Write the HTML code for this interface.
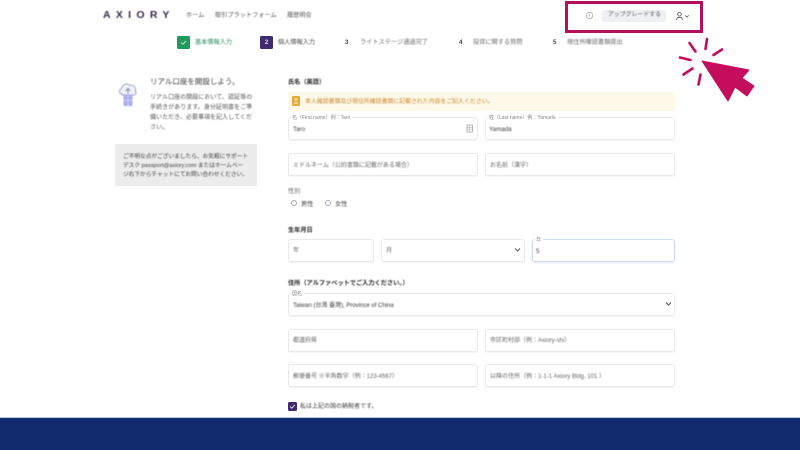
<!DOCTYPE html>
<html lang="ja">
<head>
<meta charset="utf-8">
<style>
html,body{margin:0;padding:0;background:#fff}
body{width:800px;height:450px;position:relative;overflow:hidden;font-family:"Liberation Sans","Noto Sans CJK JP",sans-serif;color:#666}
.a{position:absolute;white-space:nowrap}
.t{filter:blur(.4px)}
.f{position:absolute;box-sizing:border-box;height:23px;background:#fff;border:1px solid #e8e9ec;border-radius:3px;box-shadow:0 1px 1px rgba(0,0,0,.05)}
.p{position:absolute;white-space:nowrap;font-size:6px;line-height:10px;color:#666;filter:blur(.4px)}
.v{position:absolute;white-space:nowrap;font-size:6.2px;line-height:10px;color:#3a3a3a;filter:blur(.4px)}
.l{position:absolute;white-space:nowrap;font-size:5px;line-height:6px;color:#888;background:#fff;padding:0 2px 0 1px;filter:blur(.3px)}
.h{position:absolute;white-space:nowrap;font-size:6.2px;line-height:10px;font-weight:bold;color:#1e1e1e;filter:blur(.4px)}
.s{position:absolute;white-space:nowrap;font-size:6.2px;line-height:10px;color:#6a6a6a;filter:blur(.4px)}
.n{position:absolute;white-space:nowrap;font-size:6.2px;line-height:10px;color:#444;font-weight:bold;filter:blur(.35px)}
</style>
</head>
<body>

<!-- header -->
<div class="a t" style="left:103px;top:9px;font-size:10.5px;line-height:13px;font-weight:bold;letter-spacing:5.3px;color:#38294f">AXIORY</div>
<div class="a t" style="left:186px;top:11px;font-size:6.2px;line-height:10px;color:#555">ホーム</div>
<div class="a t" style="left:215px;top:11px;font-size:6.2px;line-height:10px;color:#555">取引プラットフォーム</div>
<div class="a t" style="left:287px;top:11px;font-size:6.2px;line-height:10px;color:#555">履歴明会</div>

<svg class="a" style="left:585px;top:11px" width="9" height="9" viewBox="0 0 9 9"><circle cx="4.5" cy="4.5" r="3.2" fill="none" stroke="#aaa" stroke-width=".8"/><path d="M4.5 2.800V4.800H3.400" fill="none" stroke="#aaa" stroke-width=".6"/></svg>
<div class="a" style="left:602px;top:10px;width:64px;height:11.500px;background:#eef0f4;border-radius:3px"></div>
<div class="a t" style="left:608px;top:10px;font-size:5.900px;line-height:11px;color:#555">アップグレードする</div>
<svg class="a" style="left:675px;top:10.500px" width="16" height="10" viewBox="0 0 16 10"><circle cx="4.500" cy="3.200" r="1.800" fill="none" stroke="#555" stroke-width=".8"/><path d="M1.500 8.800C1.800 6.800 3 6.300 4.500 6.300S7.200 6.800 7.500 8.800" fill="none" stroke="#555" stroke-width=".8"/><path d="M10.200 4.400L12 6.200L13.800 4.400" fill="none" stroke="#555" stroke-width=".8"/></svg>

<!-- stepper -->
<div class="a" style="left:177px;top:36px;width:13px;height:13px;background:#229a5d;border-radius:1.500px"></div>
<svg class="a" style="left:177px;top:36px" width="13" height="13" viewBox="0 0 13 13"><path d="M4 6.600L5.800 8.300L9 5" fill="none" stroke="#cfe9da" stroke-width=".9"/></svg>
<div class="s" style="left:195px;top:38px;color:#2a8a5a">基本情報入力</div>
<div class="a" style="left:260px;top:36px;width:13px;height:13px;background:#41296f;border-radius:1.500px"></div>
<div class="a" style="left:260px;top:36px;width:13px;height:13px;text-align:center;font-size:6.500px;line-height:13px;font-weight:bold;color:#ddd">2</div>
<div class="s" style="left:278px;top:38px;color:#444">個人情報入力</div>
<div class="n" style="left:345px;top:38px">3</div>
<div class="s" style="left:360px;top:38px">ライトステージ通過完了</div>
<div class="n" style="left:459px;top:38px">4</div>
<div class="s" style="left:473px;top:38px">投資に関する質問</div>
<div class="n" style="left:553px;top:38px">5</div>
<div class="s" style="left:567px;top:38px">現住所確認書類提出</div>

<!-- left panel -->
<svg class="a t" style="left:117px;top:81px" width="22" height="27" viewBox="0 0 22 27"><path d="M5 13C2 13 1.500 8.500 4.500 7.800C5 3.500 10 1.500 13 4.500C16.500 3.500 19.500 6.500 18 9.800C20 11 19 14 16.500 14H5Z" fill="#f3f4fb" stroke="#9ea4d8" stroke-width="1"/><path d="M8.500 10L11 7.500L13.500 10M11 8V13" fill="none" stroke="#8b90d0" stroke-width="1.200"/><rect x="6.500" y="14" width="9" height="11" fill="#a9aee8"/><path d="M11 14V25M6.500 19.500H15.500" stroke="#d6d8f6" stroke-width=".8"/></svg>
<div class="a t" style="left:150px;top:76px;font-size:7.500px;line-height:12px;color:#3a3a3a">リアル口座を開設しよう。</div>
<div class="a t" style="left:150px;top:93px;font-size:6.050px;line-height:10px;color:#555">リアル口座の開設において、認証等の<br>手続きがあります。身分証明書をご準<br>備いただき、必要事項を記入してくだ<br>さい。</div>
<div class="a" style="left:115px;top:144px;width:142px;height:42px;background:#ececec"></div>
<div class="a t" style="left:123px;top:152.500px;font-size:5.700px;line-height:9px;color:#3c3c3c">ご不明な点がございましたら、お気軽にサポート<br>デスク passport@axiory.com またはホームペー<br>ジ右下からチャットにてお問い合わせください。</div>

<!-- form -->
<div class="h" style="left:288px;top:78px">氏名（英語）</div>

<div class="a" style="left:288px;top:92px;width:387px;height:19px;background:#fdf8e7;border-radius:2px"></div>
<div class="a" style="left:292px;top:96px;width:8px;height:10px;background:#e3ad37;border-radius:1px"></div>
<svg class="a" style="left:292px;top:96px" width="8" height="10" viewBox="0 0 8 10"><circle cx="4" cy="3.400" r="1.300" fill="#fff5d8"/><path d="M1.800 7.500C2 5.800 6 5.800 6.200 7.500Z" fill="#fff5d8"/></svg>
<div class="a t" style="left:305px;top:97px;font-size:5.900px;line-height:10px;color:#c98a30">本人確認書類及び現住所確認書類に記載された内容をご記入ください。</div>

<!-- name -->
<div class="f" style="left:288px;top:117px;width:190px"></div>
<div class="l" style="left:291px;top:115px">名（First name）例：Taro</div>
<div class="v" style="left:293px;top:125px">Taro</div>
<svg class="a" style="left:466px;top:124px" width="8" height="9" viewBox="0 0 8 9"><rect x="1" y="1" width="5.500" height="7" fill="none" stroke="#999" stroke-width=".7"/><path d="M1 3.300H6.500M1 5.600H6.500M3.700 1V8" stroke="#aaa" stroke-width=".5"/></svg>

<div class="f" style="left:485px;top:117px;width:190px"></div>
<div class="l" style="left:488px;top:115px">姓（Last name）例：Yamada</div>
<div class="v" style="left:489px;top:125px">Yamada</div>

<div class="f" style="left:288px;top:153px;width:190px"></div>
<div class="p" style="left:293px;top:161px">ミドルネーム（公的書類に記載がある場合）</div>
<div class="f" style="left:485px;top:153px;width:190px"></div>
<div class="p" style="left:490px;top:161px">お名前（漢字）</div>

<!-- gender -->
<div class="s" style="left:288px;top:187px">性別</div>
<div class="a" style="left:291px;top:200px;width:4px;height:4px;border:1px solid #aab;border-radius:50%"></div>
<div class="v" style="left:301px;top:200px">男性</div>
<div class="a" style="left:325px;top:200px;width:4px;height:4px;border:1px solid #aab;border-radius:50%"></div>
<div class="v" style="left:335px;top:200px">女性</div>

<!-- birthday -->
<div class="h" style="left:288px;top:226px">生年月日</div>
<div class="f" style="left:288px;top:239px;width:86px"></div>
<div class="p" style="left:293px;top:246px">年</div>
<div class="f" style="left:381px;top:239px;width:144px"></div>
<div class="p" style="left:386px;top:246px">月</div>
<svg class="a" style="left:514px;top:247px" width="7" height="6" viewBox="0 0 7 6"><path d="M1 1.500L3.500 4L6 1.500" fill="none" stroke="#555" stroke-width="1"/></svg>
<div class="f" style="left:532px;top:239px;width:143px;border-color:#cfdcef;box-shadow:0 1px 2px rgba(90,130,220,.18)"></div>
<div class="l" style="left:535px;top:237px">日</div>
<div class="v" style="left:536px;top:247px">5</div>

<!-- address -->
<div class="h" style="left:288px;top:279px">住所（アルファベットでご入力ください。）</div>
<div class="f" style="left:288px;top:293px;width:387px"></div>
<div class="l" style="left:291px;top:291px">国名</div>
<div class="v" style="left:293px;top:301px;font-size:6px">Taiwan (台湾 臺灣), Province of China</div>
<svg class="a" style="left:665px;top:301px" width="7" height="6" viewBox="0 0 7 6"><path d="M1 1.500L3.500 4L6 1.500" fill="none" stroke="#555" stroke-width="1"/></svg>

<div class="f" style="left:288px;top:329px;width:190px"></div>
<div class="p" style="left:293px;top:336px">都道府県</div>
<div class="f" style="left:485px;top:329px;width:190px"></div>
<div class="p" style="left:490px;top:336px">市区町村部（例：Axiory-shi）</div>

<div class="f" style="left:288px;top:364px;width:190px"></div>
<div class="p" style="left:293px;top:372px">郵便番号 ※半角数字（例：123-4567）</div>
<div class="f" style="left:485px;top:364px;width:190px"></div>
<div class="p" style="left:490px;top:372px">以降の住所（例：1-1-1 Axiory Bldg. 101 ）</div>

<div class="a" style="left:288px;top:402px;width:9px;height:9px;background:#41296f;border-radius:1.500px"></div>
<svg class="a" style="left:288px;top:402px" width="9" height="9" viewBox="0 0 9 9"><path d="M2.200 4.600L3.800 6.200L6.800 2.800" fill="none" stroke="#ddd" stroke-width="1"/></svg>
<div class="v" style="left:300px;top:402px;font-size:6px">私は上記の国の納税者です。</div>

<!-- footer -->
<div class="a" style="left:0;top:417px;width:800px;height:1px;background:#b9cbe4"></div>
<div class="a" style="left:0;top:418px;width:800px;height:32px;background:#11296d"></div>

<!-- annotation -->
<div class="a" style="left:565px;top:1px;width:138px;height:32px;box-sizing:border-box;border:3px solid #b20f5c"></div>
<svg class="a" style="left:670px;top:30px" width="95" height="80" viewBox="670 30 95 80">
<path d="M702 61L749 70L742 78L754 86L747 96L735 87L728 101Z" fill="#c50d5d" stroke="#c50d5d" stroke-width="1" stroke-linejoin="round"/>
<g stroke="#c50d5d" stroke-width="2.600" stroke-linecap="round" fill="none">
<path d="M689.500 43L695.500 51.500"/>
<path d="M707 39L705.500 49"/>
<path d="M722 49.500L713.500 55"/>
<path d="M680 57.500L690.500 60"/>
<path d="M683.500 74.500L692.500 68.500"/>
<path d="M698.500 84.500L700.500 74.500"/>
</g>
</svg>

</body>
</html>
